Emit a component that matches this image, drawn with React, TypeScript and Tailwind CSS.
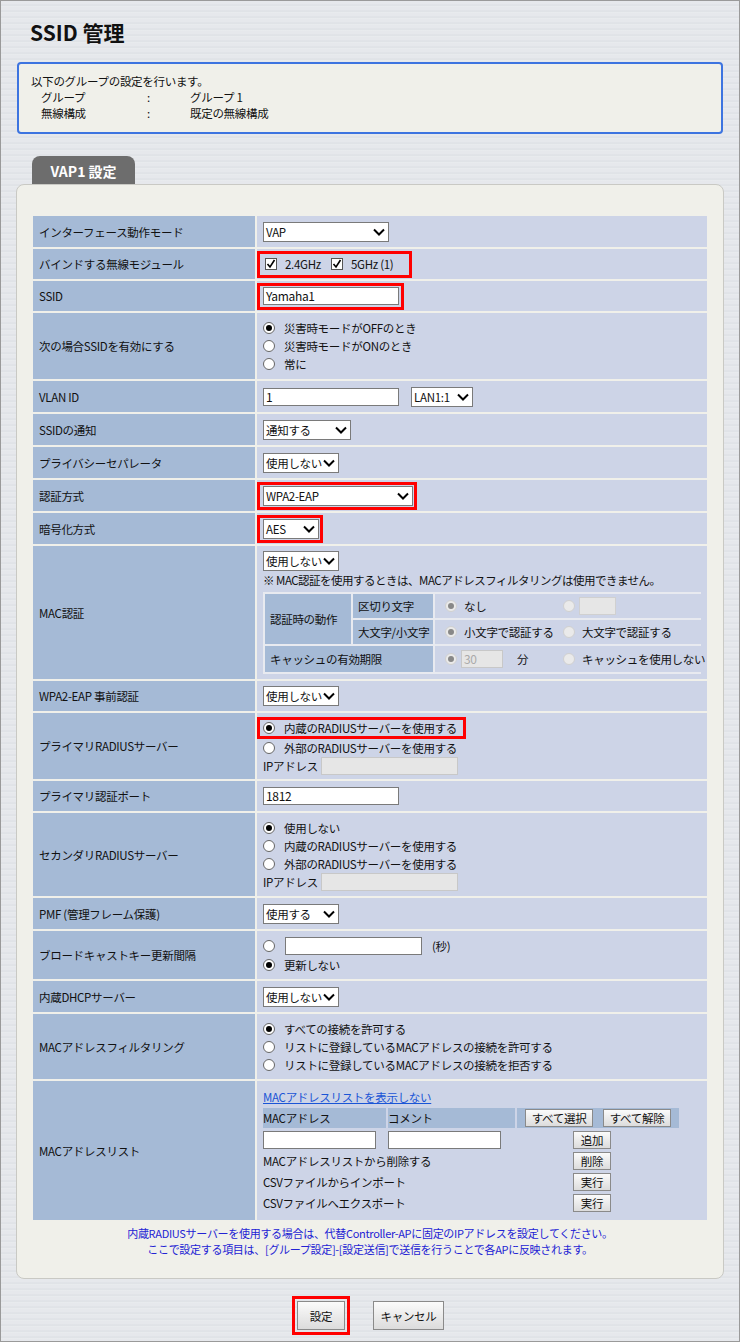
import React from 'react'

const font = { fontFamily: '"Noto Sans CJK JP", "Liberation Sans", sans-serif' }

function Chevron() {
  return (
    <svg width="12" height="8" viewBox="0 0 12 8" className="ml-auto shrink-0">
      <path d="M1 1.5 L6 6.5 L11 1.5" stroke="#000" strokeWidth="2" fill="none" />
    </svg>
  )
}

function Select({ label, w }: { label: string; w: string }) {
  return (
    <div className={`flex h-[20px] shrink-0 items-center border border-[#7a7a7a] bg-white pl-[2px] pr-[3px] text-[11.5px] ${w}`}>
      <span>{label}</span>
      <Chevron />
    </div>
  )
}

function Input({ w, value = '', disabled = false }: { w: string; value?: string; disabled?: boolean }) {
  return (
    <div
      className={`flex h-[18px] shrink-0 items-center border px-[2px] text-[12px] ${w} ${
        disabled ? 'border-[#c8c8c8] bg-[#e6e6e6] text-[#aaa]' : 'border-[#7a7a7a] bg-white'
      }`}
    >
      {value}
    </div>
  )
}

function Radio({ on = false, dim = false }: { on?: boolean; dim?: boolean }) {
  return (
    <span
      className={`inline-flex h-[12px] w-[12px] shrink-0 items-center justify-center rounded-full border ${
        dim ? 'border-[#d0d0d0] bg-[#eaeaea]' : 'border-[#666] bg-white'
      }`}
    >
      {on && <span className={`h-[6px] w-[6px] rounded-full ${dim ? 'bg-[#888]' : 'bg-black'}`} />}
    </span>
  )
}

function RadioLine({ on = false, text }: { on?: boolean; text: string }) {
  return (
    <div className="flex h-[18px] items-center gap-[9px]">
      <Radio on={on} />
      <span>{text}</span>
    </div>
  )
}

function Check() {
  return (
    <span className="inline-flex h-[12px] w-[12px] items-center justify-center border border-[#555] bg-white">
      <svg width="10" height="10" viewBox="0 0 10 10">
        <path d="M1.5 5 L4 8 L8.5 1" stroke="#000" strokeWidth="1.6" fill="none" />
      </svg>
    </span>
  )
}

function Red({ children, className = '' }: { children: React.ReactNode; className?: string }) {
  return <div className={`inline-flex items-center border-[3px] border-[#ff0000] ${className}`}>{children}</div>
}

function Btn({ children, className = '' }: { children: React.ReactNode; className?: string }) {
  return (
    <div
      className={`flex h-[18px] shrink-0 items-center justify-center border border-[#8a8a8a] bg-gradient-to-b from-[#fbfbfb] to-[#dcdcdc] text-[11.5px] ${className}`}
    >
      {children}
    </div>
  )
}

function Row({ label, h, children }: { label: string; h: string; children: React.ReactNode }) {
  return (
    <div className={`grid grid-cols-[222px_1fr] gap-[2px] ${h}`}>
      <div className="flex items-center bg-[#a5bad6] pl-[6px]">{label}</div>
      <div className="flex flex-col justify-center overflow-hidden bg-[#cdd4e7] pl-[6px]">{children}</div>
    </div>
  )
}

export default function App() {
  return (
    <div
      style={font}
      className="relative h-[1342px] w-[740px] overflow-hidden whitespace-nowrap border border-[#9a9a9a] bg-[repeating-linear-gradient(180deg,#e6e8ec_0px,#e6e8ec_3px,#dcdfe4_4px,#eceef1_6px)] text-[11.5px] leading-[16px] tracking-[-0.3px] text-[#111]"
    >
      <h1 className="pl-[29px] pt-[16px] text-[21px] font-bold leading-[30px] tracking-normal text-[#111]">SSID 管理</h1>

      <div className="mx-[16px] mt-[15px] h-[72px] rounded-[4px] border-2 border-[#3d74e0] bg-[#f0f0ea] pl-[12px] pt-[9px]">
        <div>以下のグループの設定を行います。</div>
        <div className="flex pl-[10px]">
          <span className="w-[106px]">グループ</span>
          <span className="w-[43px]">:</span>
          <span>グループ 1</span>
        </div>
        <div className="flex pl-[10px]">
          <span className="w-[106px]">無線構成</span>
          <span className="w-[43px]">:</span>
          <span>既定の無線構成</span>
        </div>
      </div>

      <div className="ml-[31px] mt-[22px] flex h-[28px] w-[103px] items-center justify-center rounded-t-[8px] bg-[#6d6d6d] pt-[2px] text-[14px] font-bold tracking-normal text-white">
        VAP1 設定
      </div>

      <div className="mx-[15px] h-[1095px] rounded-[8px] border border-[#c9c9c4] bg-[#f0f0ea] px-[16px] pt-[31px]">
        <div className="flex flex-col gap-[2px]">
          <Row label="インターフェース動作モード" h="h-[31px]">
            <Select label="VAP" w="w-[126px]" />
          </Row>
          <Row label="バインドする無線モジュール" h="h-[30px]">
            <Red className="-ml-[6px] h-[27px] w-[155px] gap-[8px] pl-[5px]">
              <Check />
              <span>2.4GHz</span>
              <span className="ml-[2px]"><Check /></span>
              <span>5GHz (1)</span>
            </Red>
          </Row>
          <Row label="SSID" h="h-[30px]">
            <Red className="-ml-[6px] h-[27px] w-[147px] pl-[3px]">
              <Input w="w-[136px]" value="Yamaha1" />
            </Red>
          </Row>
          <Row label="次の場合SSIDを有効にする" h="h-[66px]">
            <RadioLine on text="災害時モードがOFFのとき" />
            <RadioLine text="災害時モードがONのとき" />
            <RadioLine text="常に" />
          </Row>
          <Row label="VLAN ID" h="h-[31px]">
            <div className="flex items-center gap-[12px]">
              <Input w="w-[136px]" value="1" />
              <Select label="LAN1:1" w="w-[62px]" />
            </div>
          </Row>
          <Row label="SSIDの通知" h="h-[31px]">
            <Select label="通知する" w="w-[88px]" />
          </Row>
          <Row label="プライバシーセパレータ" h="h-[31px]">
            <Select label="使用しない" w="w-[76px]" />
          </Row>
          <Row label="認証方式" h="h-[31px]">
            <Red className="-ml-[6px] h-[28px] w-[160px] pl-[3px]">
              <Select label="WPA2-EAP" w="w-[150px]" />
            </Red>
          </Row>
          <Row label="暗号化方式" h="h-[31px]">
            <Red className="-ml-[6px] h-[28px] w-[66px] pl-[3px]">
              <Select label="AES" w="w-[56px]" />
            </Red>
          </Row>
          <Row label="MAC認証" h="h-[133px]">
            <Select label="使用しない" w="w-[76px]" />
            <div className="mt-[1px] tracking-[-0.5px]">※ MAC認証を使用するときは、MACアドレスフィルタリングは使用できません。</div>
            <div className="mr-[6px] mt-[4px] border border-[#e8eaf0] bg-[#e8eaf0] p-[1px]">
              <div className="grid grid-cols-[86px_80px_1fr] grid-rows-[24px_24px_26px] gap-[2px]">
                <div className="row-span-2 flex items-center bg-[#a5bad6] pl-[5px]">認証時の動作</div>
                <div className="flex items-center bg-[#a5bad6] pl-[5px]">区切り文字</div>
                <div className="flex items-center bg-[#cdd4e7] pl-[10px]">
                  <span className="flex w-[118px] items-center gap-[7px]"><Radio on dim />なし</span>
                  <span className="flex items-center gap-[4px]"><Radio dim /><span className="h-[18px] w-[37px] border border-[#d0d0d0] bg-[#e6e6e6]" /></span>
                </div>
                <div className="flex items-center bg-[#a5bad6] pl-[5px]">大文字/小文字</div>
                <div className="flex items-center bg-[#cdd4e7] pl-[10px]">
                  <span className="flex w-[118px] items-center gap-[7px]"><Radio on dim />小文字で認証する</span>
                  <span className="flex items-center gap-[7px]"><Radio dim />大文字で認証する</span>
                </div>
                <div className="col-span-2 flex items-center bg-[#a5bad6] pl-[5px]">キャッシュの有効期限</div>
                <div className="flex items-center bg-[#cdd4e7] pl-[10px]">
                  <span className="flex w-[118px] items-center gap-[4px]">
                    <Radio on dim />
                    <Input w="w-[42px]" value="30" disabled />
                    <span className="ml-[10px]">分</span>
                  </span>
                  <span className="flex items-center gap-[7px]"><Radio dim />キャッシュを使用しない</span>
                </div>
              </div>
            </div>
          </Row>
          <Row label="WPA2-EAP 事前認証" h="h-[30px]">
            <Select label="使用しない" w="w-[76px]" />
          </Row>
          <Row label="プライマリRADIUSサーバー" h="h-[66px]">
            <Red className="-ml-[6px] h-[22px] w-[209px] gap-[9px] pl-[3px]">
              <Radio on />
              <span>内蔵のRADIUSサーバーを使用する</span>
            </Red>
            <RadioLine text="外部のRADIUSサーバーを使用する" />
            <div className="flex items-center gap-[3px]">
              IPアドレス
              <Input w="w-[137px]" disabled />
            </div>
          </Row>
          <Row label="プライマリ認証ポート" h="h-[30px]">
            <Input w="w-[136px]" value="1812" />
          </Row>
          <Row label="セカンダリRADIUSサーバー" h="h-[83px]">
            <RadioLine on text="使用しない" />
            <RadioLine text="内蔵のRADIUSサーバーを使用する" />
            <RadioLine text="外部のRADIUSサーバーを使用する" />
            <div className="flex items-center gap-[3px]">
              IPアドレス
              <Input w="w-[137px]" disabled />
            </div>
          </Row>
          <Row label="PMF (管理フレーム保護)" h="h-[31px]">
            <Select label="使用する" w="w-[76px]" />
          </Row>
          <Row label="ブロードキャストキー更新間隔" h="h-[48px]">
            <div className="flex h-[20px] items-center">
              <Radio />
              <span className="ml-[10px]"><Input w="w-[137px]" /></span>
              <span className="ml-[10px]">(秒)</span>
            </div>
            <RadioLine on text="更新しない" />
          </Row>
          <Row label="内蔵DHCPサーバー" h="h-[31px]">
            <Select label="使用しない" w="w-[76px]" />
          </Row>
          <Row label="MACアドレスフィルタリング" h="h-[65px]">
            <RadioLine on text="すべての接続を許可する" />
            <RadioLine text="リストに登録しているMACアドレスの接続を許可する" />
            <RadioLine text="リストに登録しているMACアドレスの接続を拒否する" />
          </Row>
          <Row label="MACアドレスリスト" h="h-[139px]">
            <div>
              <div className="text-[#1a55d6] underline">MACアドレスリストを表示しない</div>
              <div className="mt-[3px] grid w-[416px] grid-cols-[123px_127px_1fr] gap-[2px]">
                <div className="flex h-[20px] items-center bg-[#a5bad6]">MACアドレス</div>
                <div className="flex h-[20px] items-center bg-[#a5bad6]">コメント</div>
                <div className="flex h-[20px] items-center gap-[10px] bg-[#a5bad6] pl-[8px]">
                  <Btn className="w-[68px]">すべて選択</Btn>
                  <Btn className="w-[68px]">すべて解除</Btn>
                </div>
              </div>
              <div className="mt-[2px] flex h-[20px] items-center">
                <Input w="w-[113px]" />
                <span className="ml-[12px]"><Input w="w-[113px]" /></span>
                <Btn className="ml-[72px] w-[38px]">追加</Btn>
              </div>
              <div className="mt-[1px] flex h-[20px] items-center">
                <span className="w-[310px]">MACアドレスリストから削除する</span>
                <Btn className="w-[38px]">削除</Btn>
              </div>
              <div className="mt-[1px] flex h-[20px] items-center">
                <span className="w-[310px]">CSVファイルからインポート</span>
                <Btn className="w-[38px]">実行</Btn>
              </div>
              <div className="mt-[1px] flex h-[20px] items-center">
                <span className="w-[310px]">CSVファイルへエクスポート</span>
                <Btn className="w-[38px]">実行</Btn>
              </div>
            </div>
          </Row>
        </div>
        <div className="mt-[5px] text-center text-[11px] leading-[16px] text-[#2323d4]">
          <div>内蔵RADIUSサーバーを使用する場合は、代替Controller-APに固定のIPアドレスを設定してください。</div>
          <div>ここで設定する項目は、[グループ設定]-[設定送信]で送信を行うことで各APに反映されます。</div>
        </div>
      </div>

      <div className="mt-[17px] flex items-center pl-[291px]">
        <Red className="h-[39px] w-[58px] justify-center">
          <div className="flex h-[29px] w-[48px] items-center justify-center border border-[#8a8a8a] bg-gradient-to-b from-[#fbfbfb] to-[#dcdcdc]">設定</div>
        </Red>
        <div className="ml-[23px] flex h-[29px] w-[71px] items-center justify-center border border-[#8a8a8a] bg-gradient-to-b from-[#fbfbfb] to-[#dcdcdc]">キャンセル</div>
      </div>
    </div>
  )
}
